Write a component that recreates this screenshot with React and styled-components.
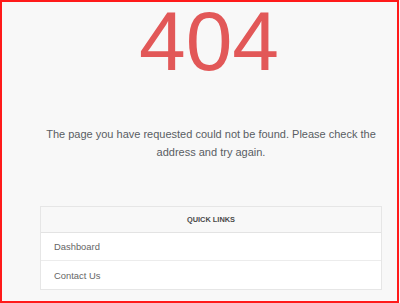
import React from "react";
import styled, { createGlobalStyle } from "styled-components";

const Global = createGlobalStyle`
  html, body { margin: 0; padding: 0; background: #f8f8f8; }
  body { font-family: "Liberation Sans", Arial, sans-serif; }
  * { box-sizing: border-box; }
`;

const Frame = styled.div`
  width: 399px;
  height: 303px;
  border: 2px solid #ff1a1a;
  background: #f8f8f8;
  overflow: hidden;
`;

const Content = styled.main`
  display: flex;
  flex-direction: column;
  align-items: stretch;
  padding: 0 15px 0 38px;
`;

const Code = styled.h1`
  margin: 0;
  font-size: 84px;
  line-height: 78px;
  font-weight: 400;
  color: #e25858;
  text-align: center;
  padding-right: 4px;
`;

const Message = styled.p`
  margin: 45px 0 0 0;
  font-size: 11px;
  line-height: 18px;
  color: #595d63;
  text-align: center;
`;

const Card = styled.section`
  margin-top: 45px;
  border: 1px solid #e6e6e6;
  background: #fff;
`;

const CardHeader = styled.div`
  height: 26px;
  display: flex;
  align-items: center;
  justify-content: center;
  background: #f8f8f8;
  border-bottom: 1px solid #e3e3e3;
  font-size: 7.4px;
  font-weight: 700;
  color: #4a4a4a;
  text-transform: uppercase;
`;

const LinkRow = styled.a`
  display: flex;
  align-items: center;
  height: 28px;
  padding-left: 13px;
  font-size: 9.4px;
  color: #666;
  text-decoration: none;
  border-bottom: ${(p) => (p.$last ? "none" : "1px solid #ececec")};
`;

export default function App() {
  return (
    <>
      <Global />
      <Frame>
        <Content>
          <Code>404</Code>
          <Message>
            The page you have requested could not be found. Please check the address and try again.
          </Message>
          <Card>
            <CardHeader>Quick Links</CardHeader>
            <LinkRow href="#">Dashboard</LinkRow>
            <LinkRow href="#" $last>Contact Us</LinkRow>
          </Card>
        </Content>
      </Frame>
    </>
  );
}
